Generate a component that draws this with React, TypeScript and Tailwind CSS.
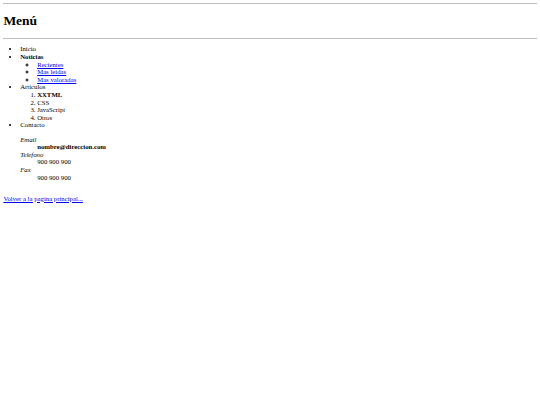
export default function App() {
  return (
    <div className="min-h-[405px] bg-white px-[3.375px] pt-[3.375px] font-['Liberation_Serif',serif] text-[6.75px] leading-[7.6px] text-black">
      <div className="h-[0.85px] bg-[#bdbdbd]" />
      <h1 className="mt-[9.05px] mb-[9.05px] text-[13.5px] font-bold leading-[15.5px]">Menú</h1>
      <div className="h-[0.85px] bg-[#bdbdbd]" />

      <ul className="mt-[6.75px] list-disc pl-[16.875px]">
        <li>Inicio</li>
        <li>
          <strong>Noticias</strong>
          <ul className="list-[circle] pl-[16.875px]">
            <li><a href="#" className="text-[#0000ee] underline">Recientes</a></li>
            <li><a href="#" className="text-[#0000ee] underline">Mas leidas</a></li>
            <li><a href="#" className="text-[#0000ee] underline">Mas valoradas</a></li>
          </ul>
        </li>
        <li>
          Articulos
          <ol className="list-decimal pl-[16.875px]">
            <li><strong>XXTML</strong></li>
            <li>CSS</li>
            <li>JavaScript</li>
            <li>Otros</li>
          </ol>
        </li>
        <li>
          Contacto
          <dl className="my-[6.75px]">
            <dt><em>Email</em></dt>
            <dd className="ml-[16.875px]"><strong>nombre@direccion.com</strong></dd>
            <dt><em>Telefono</em></dt>
            <dd className="ml-[16.875px]">900 900 900</dd>
            <dt><em>Fax</em></dt>
            <dd className="ml-[16.875px]">900 900 900</dd>
          </dl>
        </li>
      </ul>

      <p className="mt-[13.5px]">
        <a href="#" className="text-[#0000ee] underline">Volver a la pagina principal...</a>
      </p>
    </div>
  );
}
